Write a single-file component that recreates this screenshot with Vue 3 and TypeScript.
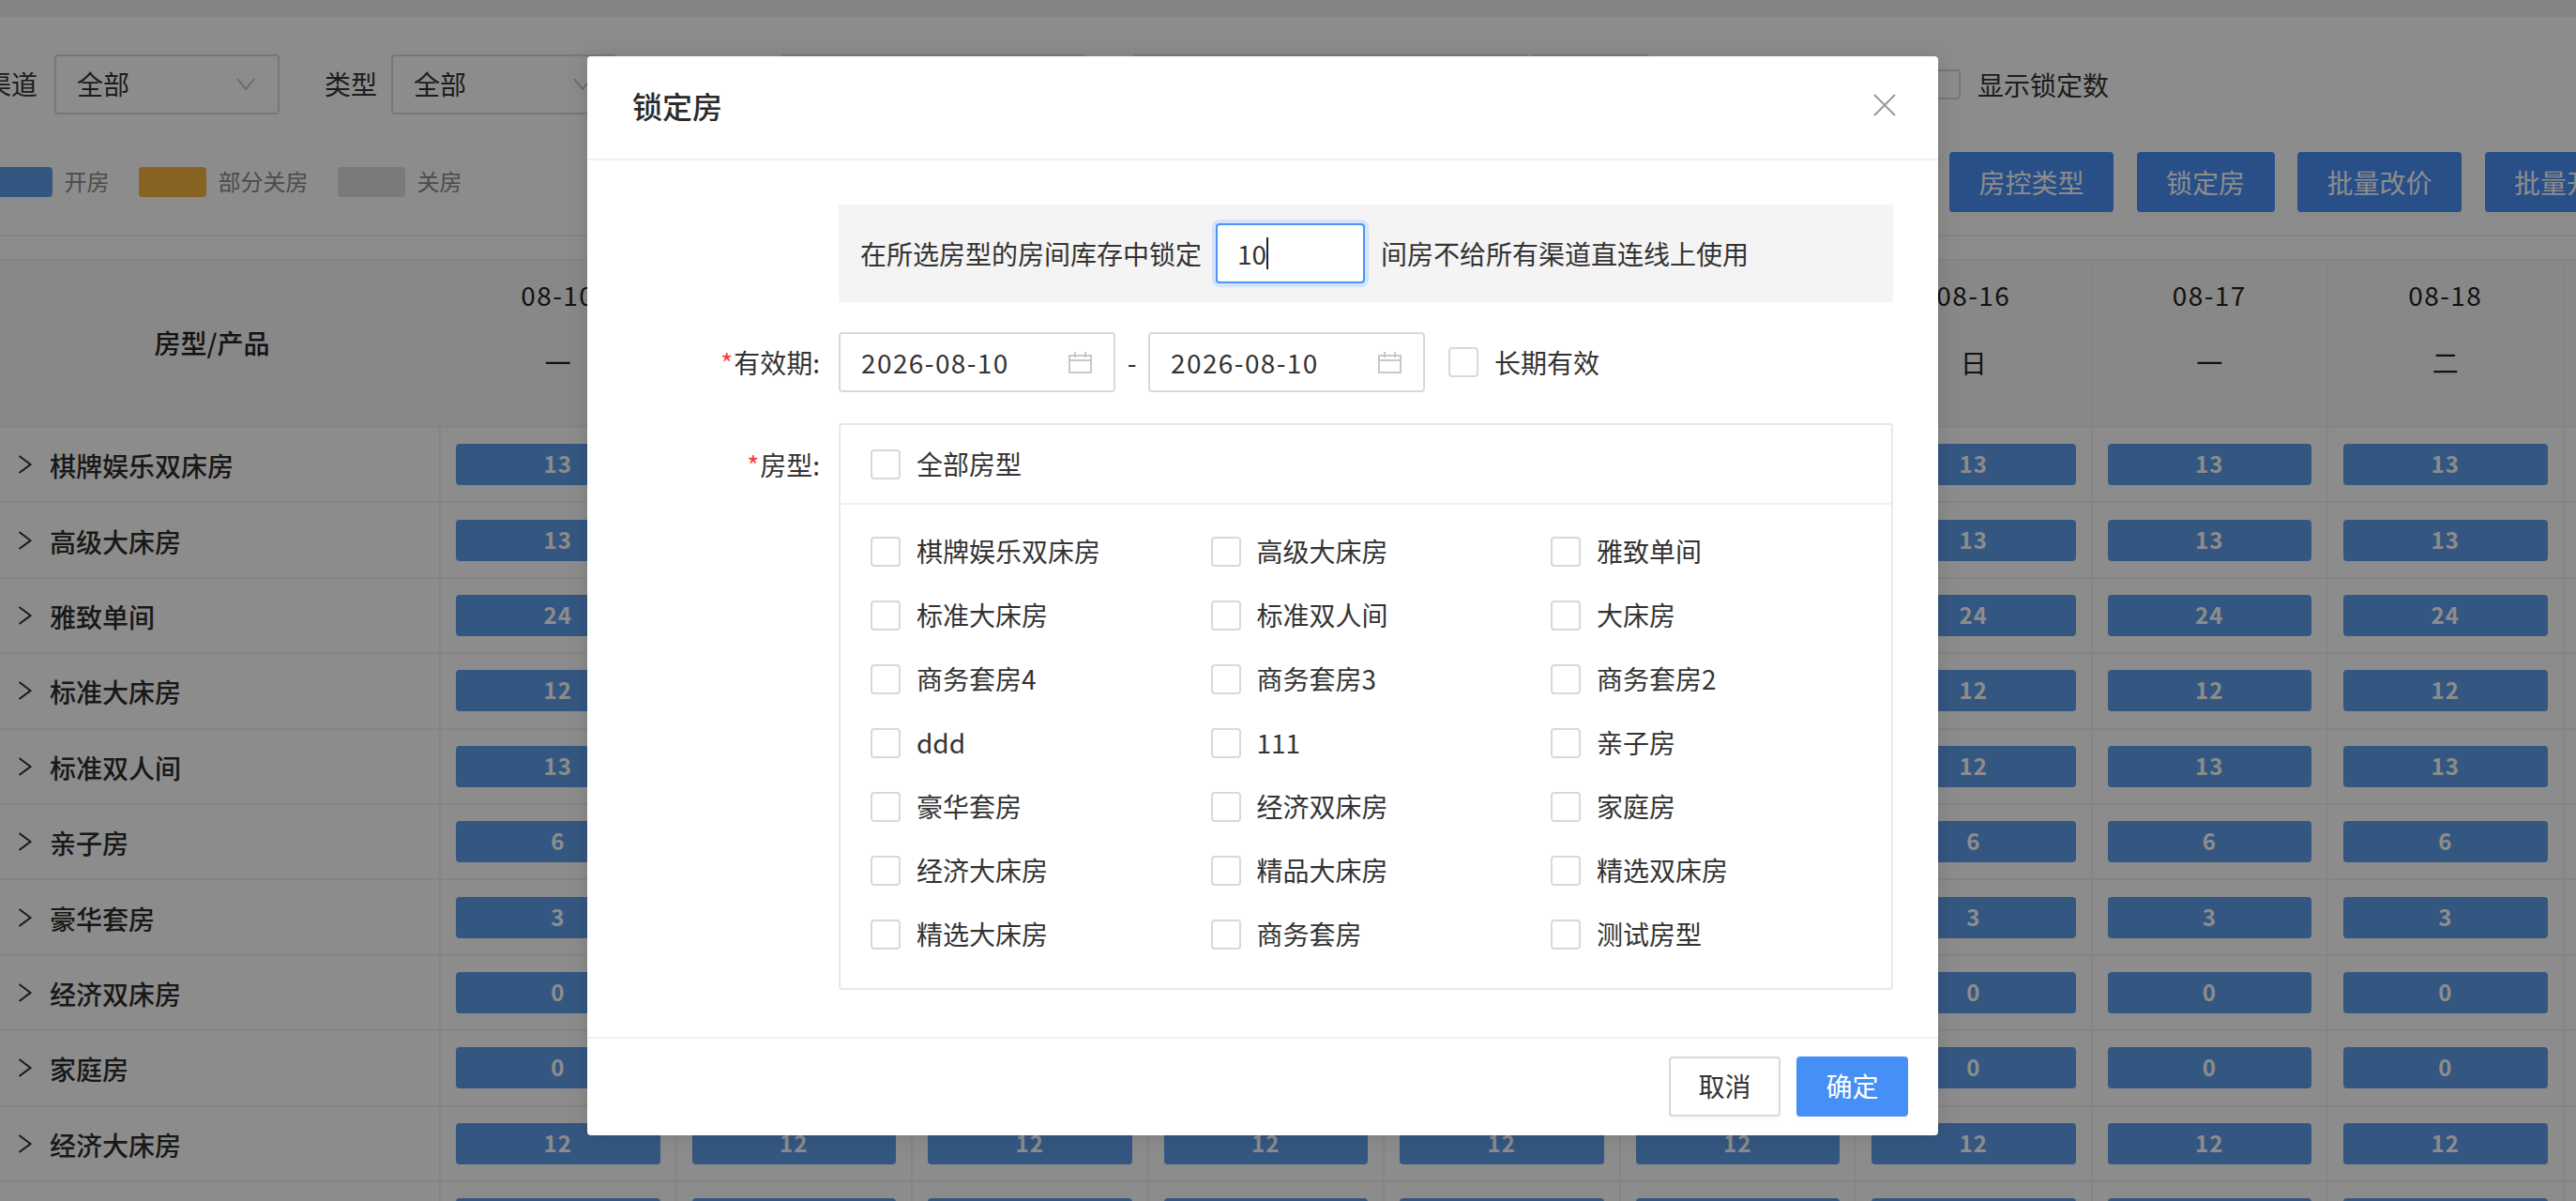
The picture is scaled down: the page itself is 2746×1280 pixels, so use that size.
<template>
  <div class="viewport">
    <div class="page">
      <div class="top-strip"></div>

      <div class="filters">
        <span class="filter-label">渠道</span>
        <div class="select first-select">
          <span>全部</span>
          <svg class="arrow" viewBox="0 0 20 14"><polyline points="1,1 10,12 19,1" /></svg>
        </div>
        <span class="filter-label type-label">类型</span>
        <div class="select second-select">
          <span>全部</span>
          <svg class="arrow" viewBox="0 0 20 14"><polyline points="1,1 10,12 19,1" /></svg>
        </div>
        <div class="select room-select"></div>
        <div class="select date-select"></div>
        <div class="select days-select"></div>
        <label class="show-lock">
          <span class="checkbox"></span>
          <span>显示锁定数</span>
        </label>
      </div>

      <div class="toolbar">
        <div class="legend">
          <span class="swatch swatch-open"></span><span class="legend-text">开房</span>
          <span class="swatch swatch-part"></span><span class="legend-text">部分关房</span>
          <span class="swatch swatch-closed"></span><span class="legend-text">关房</span>
        </div>
        <div class="actions">
          <button v-for="a in actions" :key="a" class="action-btn">{{ a }}</button>
        </div>
      </div>

      <div class="calendar">
        <div class="cal-row cal-head">
          <div class="cell name-head">房型/产品</div>
          <div v-for="d in days" :key="d.date" class="cell day-head">
            <div class="date-text">{{ d.date }}</div>
            <div>{{ d.week }}</div>
          </div>
        </div>
        <div v-for="r in rows" :key="r.name" class="cal-row">
          <div class="cell name-cell">
            <svg class="chevron" viewBox="0 0 15 20"><polyline points="1.5,1 13.5,10 1.5,19" /></svg>
            <span>{{ r.name }}</span>
          </div>
          <div v-for="(d, i) in days" :key="d.date" class="cell stock-cell">
            <div class="stock-bar">{{ stockOf(r, i) }}</div>
          </div>
        </div>
      </div>
    </div>

    <div class="mask"></div>

    <div class="modal">
      <div class="modal-header">
        <span class="modal-title">锁定房</span>
        <svg class="close" viewBox="0 0 24 24"><path d="M1 1 L23 23 M23 1 L1 23" /></svg>
      </div>

      <div class="modal-body">
        <div class="lock-info">
          <span>在所选房型的房间库存中锁定</span>
          <div class="count-input"><span>10</span><i class="caret"></i></div>
          <span>间房不给所有渠道直连线上使用</span>
        </div>

        <div class="form-row date-row">
          <div class="form-label"><em>*</em>有效期:</div>
          <div class="date-input">
            <span class="date-value">2026-08-10</span>
            <svg class="cal-icon" viewBox="0 0 25 24">
              <path d="M1 5 H24 V23 H1 Z M1 10 H24 M7 1 V7 M18 1 V7" />
            </svg>
          </div>
          <span class="dash">-</span>
          <div class="date-input">
            <span class="date-value">2026-08-10</span>
            <svg class="cal-icon" viewBox="0 0 25 24">
              <path d="M1 5 H24 V23 H1 Z M1 10 H24 M7 1 V7 M18 1 V7" />
            </svg>
          </div>
          <label class="long-term">
            <span class="checkbox"></span>
            <span>长期有效</span>
          </label>
        </div>

        <div class="form-row type-row">
          <div class="form-label type-form-label"><em>*</em>房型:</div>
          <div class="type-panel">
            <div class="type-all">
              <label class="check-item">
                <span class="checkbox"></span>
                <span class="check-text">全部房型</span>
              </label>
            </div>
            <div class="type-grid">
              <label v-for="t in roomTypes" :key="t" class="check-item">
                <span class="checkbox"></span>
                <span class="check-text">{{ t }}</span>
              </label>
            </div>
          </div>
        </div>
      </div>

      <div class="modal-footer">
        <button class="btn btn-cancel">取消</button>
        <button class="btn btn-ok">确定</button>
      </div>
    </div>
  </div>
</template>

<script setup lang="ts">
interface Day {
  date: string
  week: string
}

interface Row {
  name: string
  stock: number
  // 个别日期库存不同
  special?: Record<number, number>
}

const actions = ['房控类型', '锁定房', '批量改价', '批量开关房']

const days: Day[] = [
  { date: '08-10', week: '一' },
  { date: '08-11', week: '二' },
  { date: '08-12', week: '三' },
  { date: '08-13', week: '四' },
  { date: '08-14', week: '五' },
  { date: '08-15', week: '六' },
  { date: '08-16', week: '日' },
  { date: '08-17', week: '一' },
  { date: '08-18', week: '二' },
  { date: '08-19', week: '三' }
]

const rows: Row[] = [
  { name: '棋牌娱乐双床房', stock: 13 },
  { name: '高级大床房', stock: 13 },
  { name: '雅致单间', stock: 24 },
  { name: '标准大床房', stock: 12 },
  { name: '标准双人间', stock: 13, special: { 6: 12 } },
  { name: '亲子房', stock: 6 },
  { name: '豪华套房', stock: 3 },
  { name: '经济双床房', stock: 0 },
  { name: '家庭房', stock: 0 },
  { name: '经济大床房', stock: 12 },
  { name: '精品大床房', stock: 12 }
]

const roomTypes = [
  '棋牌娱乐双床房', '高级大床房', '雅致单间',
  '标准大床房', '标准双人间', '大床房',
  '商务套房4', '商务套房3', '商务套房2',
  'ddd', '111', '亲子房',
  '豪华套房', '经济双床房', '家庭房',
  '经济大床房', '精品大床房', '精选双床房',
  '精选大床房', '商务套房', '测试房型'
]

const stockOf = (row: Row, index: number) => row.special?.[index] ?? row.stock
</script>

<style>
html,
body {
  margin: 0;
  overflow: hidden;
  background: #fff;
}
</style>

<style scoped>
.viewport {
  position: relative;
  width: 2746px;
  height: 1280px;
  overflow: hidden;
  font-family: "Noto Sans CJK SC", "Noto Sans", sans-serif;
  font-size: 28px;
  color: #333;
}

.page {
  margin-left: -16px;
  width: 2900px;
}

.top-strip {
  height: 18px;
  background: #eef0f4;
}

.filters {
  display: flex;
  align-items: center;
  height: 64px;
  margin-top: 40px;
}

.filter-label {
  width: 56px;
  white-space: nowrap;
  padding-bottom: 3px;
}

.type-label {
  margin-left: 48px;
  margin-right: 15px;
}

.select {
  box-sizing: border-box;
  height: 64px;
  border: 2px solid #d9d9d9;
  border-radius: 4px;
  display: flex;
  align-items: center;
  justify-content: space-between;
  padding: 0 24px 3px 22px;
  flex-shrink: 0;
}

.first-select {
  width: 240px;
  margin-left: 18px;
}

.second-select {
  width: 240px;
}

.room-select {
  width: 326px;
  margin-left: 175px;
}

.date-select {
  width: 423px;
  margin-left: 49px;
}

.days-select {
  width: 127px;
  margin-left: 2px;
}

.arrow {
  width: 20px;
  height: 14px;
  margin-top: 3px;
  fill: none;
  stroke: #bfbfbf;
  stroke-width: 1.8;
}

.show-lock {
  display: flex;
  align-items: center;
  gap: 18px;
  margin-left: 299px;
  flex-shrink: 0;
}

.checkbox {
  display: inline-block;
  box-sizing: border-box;
  width: 32px;
  height: 32px;
  border: 2px solid #d9d9d9;
  border-radius: 4px;
  background: #fff;
  flex-shrink: 0;
}

.toolbar {
  display: flex;
  align-items: center;
  height: 64px;
  margin-top: 40px;
  padding-bottom: 24px;
  border-bottom: 2px solid #f0f0f0;
}

.legend {
  display: flex;
  align-items: center;
  width: 2094px;
  flex-shrink: 0;
}

.swatch {
  width: 72px;
  height: 32px;
  border-radius: 4px;
}

.swatch-open {
  background: #5f9fec;
}

.swatch-part {
  background: #f7b241;
}

.swatch-closed {
  background: #dfdfdf;
}

.legend-text {
  font-size: 24px;
  color: #8a8a8a;
  margin-left: 12.5px;
  margin-right: 31.5px;
  padding-bottom: 3px;
}

.actions {
  display: flex;
  gap: 24.5px;
}

.action-btn {
  height: 64px;
  padding: 0 31.5px;
  border: none;
  border-radius: 4px;
  background: #4990f7;
  color: #fff;
  font: inherit;
  white-space: nowrap;
  box-shadow: 0 4px 0 rgba(0, 0, 0, 0.015);
  flex-shrink: 0;
}

.calendar {
  margin-top: 24px;
  border-top: 2px solid #f0f0f0;
}

.cal-row {
  display: grid;
  grid-template-columns: 486px repeat(10, 251.5px);
  height: 80.4px;
  box-sizing: border-box;
  border-bottom: 2px solid #f0f0f0;
}

.cal-head {
  height: 178px;
  background: #f8f8f8;
}

.cell {
  box-sizing: border-box;
  border-right: 2px solid #f3f3f3;
}

.name-head {
  display: flex;
  align-items: center;
  justify-content: center;
  padding-bottom: 2px;
  font-weight: 500;
  color: #222;
}

.day-head {
  line-height: 72px;
  text-align: center;
  color: #222;
}

.date-text {
  letter-spacing: 1.4px;
}

.name-cell {
  display: flex;
  align-items: center;
  gap: 19px;
  padding-left: 35px;
  font-weight: 500;
  color: #2d2d2d;
}

.name-cell span {
  position: relative;
  top: 1px;
}

.chevron {
  width: 15px;
  height: 20px;
  fill: none;
  stroke: #2d2d2d;
  stroke-width: 2;
}

.stock-cell {
  display: flex;
  align-items: center;
  padding: 0 16px;
}

.stock-bar {
  width: 100%;
  height: 44px;
  line-height: 42px;
  border-radius: 4px;
  background: #5f9fec;
  color: #fff;
  text-align: center;
  font-size: 24px;
  font-weight: 700;
  letter-spacing: 1px;
}

.mask {
  position: absolute;
  inset: 0;
  background: rgba(0, 0, 0, 0.45);
}

.modal {
  position: absolute;
  left: 626px;
  top: 60px;
  width: 1440px;
  height: 1150px;
  background: #fff;
  border-radius: 4px;
  box-shadow: 0 0 24px rgba(0, 0, 0, 0.12);
  display: flex;
  flex-direction: column;
}

.modal-header {
  box-sizing: border-box;
  height: 111px;
  flex-shrink: 0;
  display: flex;
  align-items: center;
  justify-content: space-between;
  padding: 0 45px 6px 48px;
  border-bottom: 2px solid #f0f0f0;
}

.modal-title {
  font-size: 32px;
  font-weight: 500;
  color: #2b2b2b;
}

.close {
  width: 24px;
  height: 24px;
  fill: none;
  stroke: #999;
  stroke-width: 2;
}

.modal-body {
  flex: 1;
  padding: 47px 48px 0 268px;
}

.lock-info {
  display: flex;
  align-items: center;
  height: 104px;
  padding-left: 23px;
  background: #f4f4f4;
}

.count-input {
  box-sizing: border-box;
  display: flex;
  align-items: center;
  width: 159px;
  height: 64px;
  margin: 0 17px 0 15px;
  padding-left: 21px;
  border: 2px solid #4a95f7;
  border-radius: 4px;
  background: #fff;
  box-shadow: 0 0 0 4px #d3e4fb;
  color: #333;
}

.caret {
  width: 2px;
  height: 34px;
  background: #222;
}

.form-row {
  display: flex;
  position: relative;
}

.date-row {
  align-items: center;
  margin-top: 32px;
  height: 64px;
}

.type-row {
  margin-top: 33px;
}

.form-label {
  position: absolute;
  right: 100%;
  margin-right: 20px;
  white-space: nowrap;
  color: #333;
}

.form-label em {
  font-style: normal;
  color: #f5403d;
  margin-right: 1px;
}

.type-form-label {
  top: 24px;
}

.date-input {
  box-sizing: border-box;
  display: flex;
  align-items: center;
  justify-content: space-between;
  width: 295px;
  height: 64px;
  padding: 0 23px 0 22px;
  border: 2px solid #d9d9d9;
  border-radius: 4px;
}

.date-value {
  letter-spacing: 1.4px;
}

.cal-icon {
  width: 25px;
  height: 24px;
  fill: none;
  stroke: #c8c8c8;
  stroke-width: 2;
}

.dash {
  width: 35px;
  text-align: center;
}

.long-term {
  display: flex;
  align-items: center;
  gap: 17px;
  margin-left: 25px;
}

.type-panel {
  box-sizing: border-box;
  width: 1124px;
  height: 604px;
  border: 2px solid #e8e8e8;
  border-radius: 4px;
}

.type-all {
  display: flex;
  align-items: center;
  height: 83px;
  padding-left: 32px;
  border-bottom: 2px solid #f0f0f0;
}

.check-item {
  display: flex;
  align-items: center;
  gap: 17px;
}

.check-text {
  padding-bottom: 2px;
}

.type-grid {
  display: grid;
  grid-template-columns: repeat(3, 362.5px);
  grid-auto-rows: 68px;
  padding: 16px 0 0 32px;
}

.modal-footer {
  box-sizing: border-box;
  height: 105px;
  flex-shrink: 0;
  display: flex;
  justify-content: flex-end;
  gap: 17px;
  padding: 19px 32px 0 0;
  border-top: 2px solid #f0f0f0;
}

.btn {
  box-sizing: border-box;
  width: 119px;
  height: 64px;
  padding: 0 0 2px;
  border-radius: 4px;
  font: inherit;
  box-shadow: 0 4px 0 rgba(0, 0, 0, 0.015);
}

.btn-cancel {
  background: #fff;
  border: 2px solid #d9d9d9;
  color: #333;
}

.btn-ok {
  background: #468ff7;
  border: none;
  color: #fff;
}
</style>
